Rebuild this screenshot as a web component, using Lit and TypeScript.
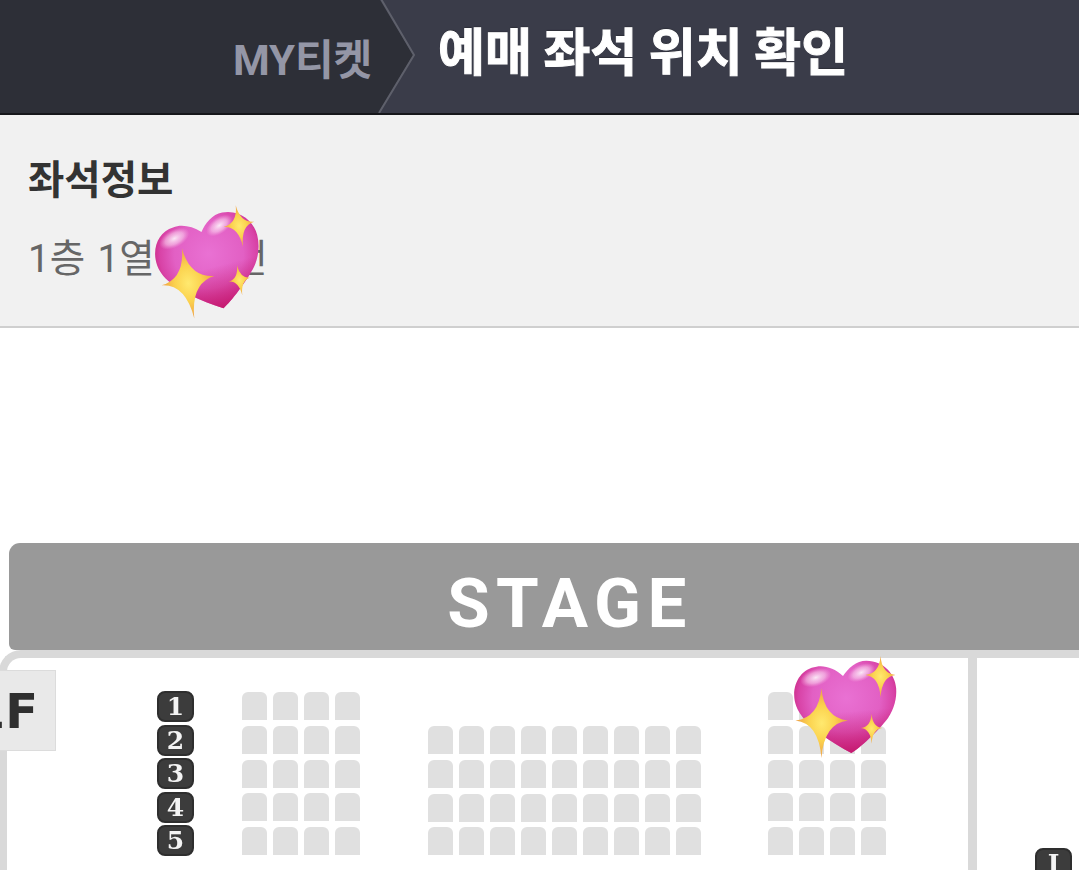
import { LitElement, html, css, svg } from "lit";
import { customElement } from "lit/decorators.js";

function star(cx: number, cy: number, l: number, r: number, t: number, b: number, k: number) {
  return `M${cx} ${cy - t}Q${cx + k} ${cy - k} ${cx + r} ${cy}Q${cx + k} ${cy + k} ${cx} ${cy + b}Q${cx - k} ${cy + k} ${cx - l} ${cy}Q${cx - k} ${cy - k} ${cx} ${cy - t}Z`;
}

const HEART =
  "M280 108C255 85 225 75 200 80C160 85 133 120 133 165C133 215 170 250 215 285C245 305 275 325 305 340C330 325 385 275 415 235C435 205 442 175 440 145C437 105 405 62 350 62C320 62 295 85 280 108Z";

let uid = 0;
function heart(cls: string) {
  const id = `h${uid++}`;
  return html`<svg class="heart ${cls}" viewBox="130 48 312 307" aria-hidden="true">
    ${svg`<defs>
      <radialGradient id="${id}b" gradientUnits="userSpaceOnUse" cx="290" cy="175" r="170">
        <stop offset="0" stop-color="#e971d3"/>
        <stop offset=".6" stop-color="#e260c4"/>
        <stop offset=".85" stop-color="#d842a6"/>
        <stop offset="1" stop-color="#c8277f"/>
      </radialGradient>
      <linearGradient id="${id}d" gradientUnits="userSpaceOnUse" x1="300" y1="215" x2="310" y2="335">
        <stop offset="0" stop-color="#c4176b" stop-opacity="0"/>
        <stop offset="1" stop-color="#c4176b" stop-opacity=".8"/>
      </linearGradient>
      <radialGradient id="${id}s">
        <stop offset="0" stop-color="#ffe96f"/>
        <stop offset=".5" stop-color="#fbd24e"/>
        <stop offset="1" stop-color="#ee9f45"/>
      </radialGradient>
      <radialGradient id="${id}g">
        <stop offset="0" stop-color="#fff" stop-opacity=".85"/>
        <stop offset=".6" stop-color="#fbd6f0" stop-opacity=".55"/>
        <stop offset="1" stop-color="#f8b8e4" stop-opacity="0"/>
      </radialGradient>
    </defs>
    <path fill="url(#${id}b)" d="${HEART}"/>
    <path fill="url(#${id}d)" d="${HEART}"/>
    <ellipse cx="198" cy="113" rx="48" ry="26" transform="rotate(-18 198 113)" fill="url(#${id}g)"/>
    <ellipse cx="335" cy="98" rx="44" ry="24" transform="rotate(-25 335 98)" fill="url(#${id}g)"/>
    <path fill="url(#${id}s)" d="${star(215, 242, 78, 80, 97, 113, 8)}"/>
    <path fill="url(#${id}s)" d="${star(393, 105, 46, 45, 57, 67, 4)}"/>
    <path fill="url(#${id}s)" d="${star(366, 265, 32, 32, 43, 47, 3)}"/>`}
  </svg>`;
}

const seats = (cols: number, rows: number) =>
  Array.from({ length: cols * rows }, () => html`<i class="seat"></i>`);

@customElement("app-root")
export class AppRoot extends LitElement {
  static styles = css`
    :host {
      display: block;
      width: 1079px;
      height: 870px;
      overflow: hidden;
      background: #fff;
      font-family: "Noto Sans CJK KR", "Roboto", sans-serif;
    }
    .top {
      position: relative;
      display: flex;
      height: 113px;
      background: #3a3c49;
      border-bottom: 2px solid #16171b;
    }
    .crumb {
      width: 380px;
      box-sizing: border-box;
      padding-right: 8px;
      display: flex;
      align-items: center;
      justify-content: flex-end;
      background: #2d2f37;
      color: #9496a6;
      font-family: "Roboto", "Noto Sans CJK KR", sans-serif;
      font-size: 42px;
      font-weight: 700;
      letter-spacing: -0.1px;
    }
    .arrow {
      position: absolute;
      left: 376px;
      top: 0;
      width: 42px;
      height: 113px;
    }
    h1 {
      margin: 0 0 0 58px;
      align-self: center;
      color: #fff;
      font-size: 51px;
      font-weight: 700;
      line-height: 1;
      transform: translateY(-7px);
      text-shadow: 0 -1px 1px #23242b;
      -webkit-text-stroke: 1px #fff;
    }
    .info {
      position: relative;
      height: 213px;
      box-sizing: border-box;
      padding: 37px 0 0 28px;
      background: #f1f1f1;
      border-bottom: 2px solid #cfcfcf;
    }
    .info h2 {
      margin: 0;
      color: #333;
      font-size: 39.5px;
      line-height: 50px;
      font-weight: 700;
    }
    .info p {
      margin: 32px 0 0;
      color: #666;
      font-size: 38.5px;
      line-height: 50px;
      font-family: "Roboto", "Noto Sans CJK KR", sans-serif;
      word-spacing: 3px;
    }
    .heart {
      position: absolute;
      width: 104px;
      height: 102px;
      z-index: 3;
    }
    .heart-a {
      left: 156px;
      top: 95px;
      width: 106px;
      height: 106px;
      transform: rotate(-10deg);
    }
    .heart-b {
      left: 793px;
      top: 328px;
    }
    .map {
      position: relative;
      padding: 215px 0 0 9px;
      height: 440px;
      box-sizing: border-box;
    }
    .stage {
      position: relative;
      height: 107px;
      box-sizing: border-box;
      background: #999;
      border-radius: 11px 0 0 6px;
      display: flex;
      align-items: center;
      justify-content: center;
      padding: 14px 0 0 52px;
      color: #fff;
      font-family: "Roboto", sans-serif;
      font-size: 69px;
      font-weight: 700;
      letter-spacing: 6.5px;
      filter: blur(0.6px);
    }
    .hall {
      position: absolute;
      left: 0;
      right: 0;
      top: 320px;
      height: 120px;
      filter: blur(0.5px);
    }
    .band {
      position: absolute;
      left: -1px;
      top: 2px;
      width: 1100px;
      height: 250px;
      box-sizing: border-box;
      border-top: 8px solid #d9d9d9;
      border-left: 8px solid #d9d9d9;
      border-top-left-radius: 22px;
    }
    .divider {
      position: absolute;
      left: 968px;
      top: 10px;
      width: 9px;
      height: 230px;
      background: #d9d9d9;
    }
    .floor {
      position: absolute;
      left: -14px;
      top: 22px;
      width: 68px;
      height: 79px;
      display: flex;
      align-items: center;
      justify-content: flex-end;
      background: #e9e9e9;
      border: 1px solid #dcdcdc;
      color: #2f2f2f;
      font-family: "DejaVu Sans", sans-serif;
      font-size: 48px;
      font-weight: 700;
    }
    .floor span {
      margin-right: 17px;
    }
    .block {
      position: absolute;
      display: grid;
      grid-auto-rows: 28px;
      grid-template-columns: repeat(var(--cols), 25px);
      gap: 5.8px 6px;
    }
    .seat {
      display: block;
      background: #e0e0e0;
      border-radius: 6px 6px 0 0;
    }
    .b1 {
      --cols: 4;
      left: 241.5px;
      top: 44px;
    }
    .b2 {
      --cols: 9;
      left: 427.5px;
      top: 78px;
    }
    .b3 {
      --cols: 4;
      left: 767.5px;
      top: 44px;
    }
    .rows {
      position: absolute;
      left: 157px;
      top: 43px;
      display: flex;
      flex-direction: column;
      gap: 2.6px;
    }
    .rows.far {
      left: 1035px;
      top: 200px;
    }
    .badge {
      width: 37px;
      height: 31px;
      display: flex;
      align-items: center;
      justify-content: center;
      box-sizing: border-box;
      background: #3c3c3c;
      border: 2px solid #2e2e2e;
      border-radius: 8px;
      color: #f4f4f4;
      font-family: "DejaVu Serif", serif;
      font-size: 25px;
      line-height: 1;
      font-weight: 700;
    }
  `;

  render() {
    return html`
      <header class="top">
        <div class="crumb">MY티켓</div>
        <svg class="arrow" viewBox="0 0 42 113" aria-hidden="true">
          <path d="M0 0H4L37 55L2 113H0Z" fill="#2d2f37"/>
          <path d="M5 -1L38 55L3 113" fill="none" stroke="#5e606b" stroke-width="2"/>
        </svg>
        <h1>예매 좌석 위치 확인</h1>
      </header>
      <section class="info">
        <h2>좌석정보</h2>
        <p>1층 1열 123번</p>
        ${heart("heart-a")}
      </section>
      <section class="map">
        <div class="hall">
          <div class="band"></div>
          <div class="divider"></div>
          <div class="floor"><span>1F</span></div>
          <div class="rows">
            ${[1, 2, 3, 4, 5].map((n) => html`<div class="badge">${n}</div>`)}
          </div>
          <div class="block b1">${seats(4, 5)}</div>
          <div class="block b2">${seats(9, 4)}</div>
          <div class="block b3">${seats(4, 5)}</div>
          <div class="rows far"><div class="badge">I</div></div>
        </div>
        <div class="stage">STAGE</div>
        ${heart("heart-b")}
      </section>
    `;
  }
}
